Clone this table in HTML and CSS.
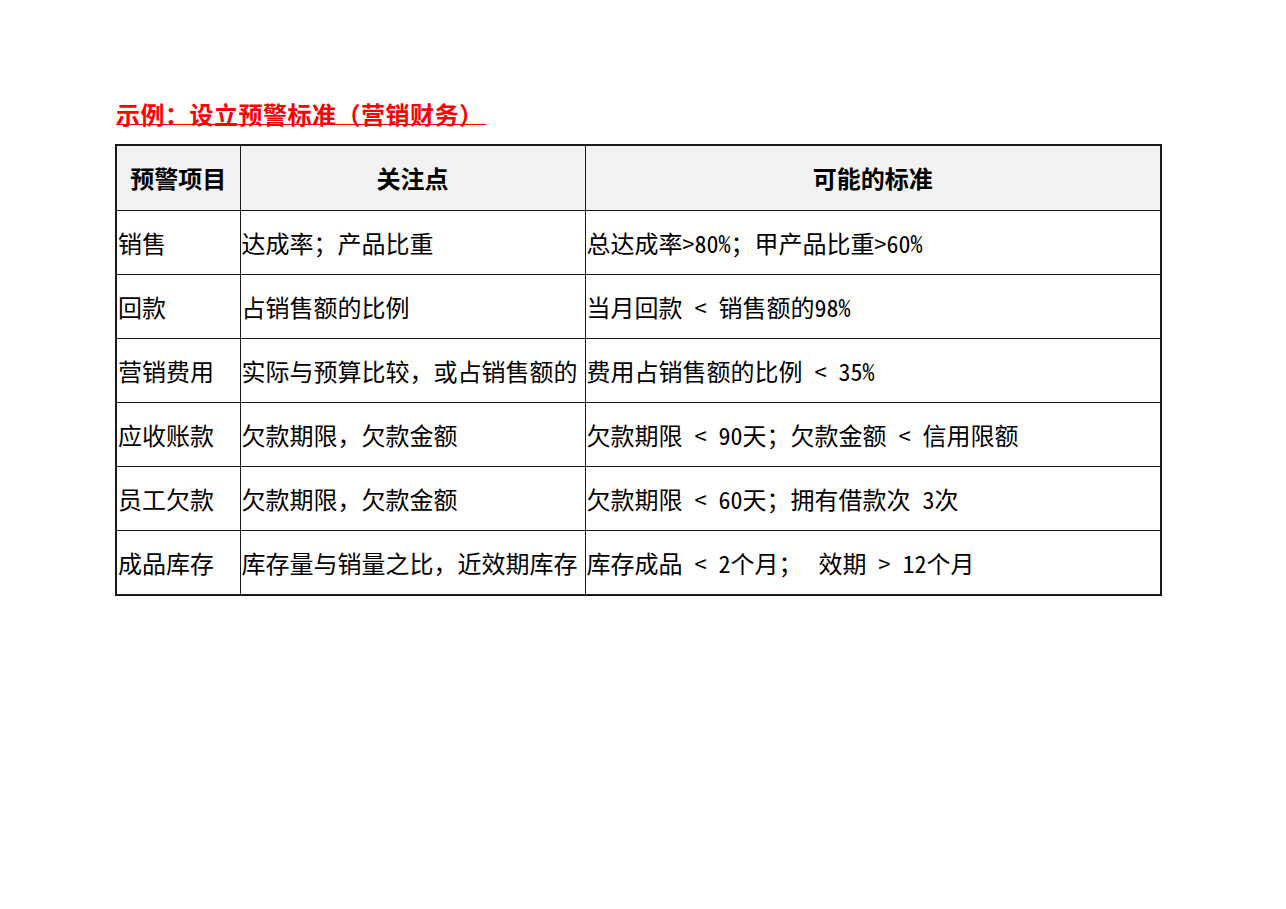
FILE: index.html
```html
<!DOCTYPE html>
<html lang="zh-CN">
<head>
<meta charset="utf-8">
<title>示例：设立预警标准（营销财务）</title>
<link rel="stylesheet" href="styles.css">
</head>
<body>
<div class="sheet">
  <h1 class="title"><span class="title-text">示例：设立预警标准（营销财务）</span></h1>
  <table class="grid">
    <colgroup>
      <col class="c1">
      <col class="c2">
      <col class="c3">
    </colgroup>
    <thead>
      <tr>
        <th>预警项目</th>
        <th>关注点</th>
        <th>可能的标准</th>
      </tr>
    </thead>
    <tbody>
      <tr><td>销售</td><td>达成率；产品比重</td><td>总达成率&gt;80%；甲产品比重&gt;60%</td></tr>
      <tr><td>回款</td><td>占销售额的比例</td><td>当月回款 &lt; 销售额的98%</td></tr>
      <tr><td>营销费用</td><td>实际与预算比较，或占销售额的</td><td>费用占销售额的比例 &lt; 35%</td></tr>
      <tr><td>应收账款</td><td>欠款期限，欠款金额</td><td>欠款期限 &lt; 90天；欠款金额 &lt; 信用限额</td></tr>
      <tr><td>员工欠款</td><td>欠款期限，欠款金额</td><td>欠款期限 &lt; 60天；拥有借款次 3次</td></tr>
      <tr><td>成品库存</td><td>库存量与销量之比，近效期库存</td><td>库存成品 &lt; 2个月；<span class="gap"></span>效期 &gt; 12个月</td></tr>
    </tbody>
  </table>
</div>
</body>
</html>
```

FILE: styles.css
```css
html, body {
  margin: 0;
  padding: 0;
  background: #ffffff;
}

body {
  font-family: "Noto Sans Mono CJK SC", "Noto Sans CJK SC", "Noto Sans", sans-serif;
  color: #000000;
}

.sheet {
  padding: 104px 0 0 115px;
}

.title {
  margin: 0 0 19px 1px;
  font-size: 24px;
  line-height: 20px;
  font-weight: bold;
  color: #ff0000;
  letter-spacing: 0.5px;
}

.title-text {
  display: inline-block;
  padding-right: 2px;
  border-bottom: 1.5px solid #ff0000;
}

.grid {
  border-collapse: collapse;
  table-layout: fixed;
  width: 1045px;
  border: 2px solid #1a1a1a;
}

.c1 { width: 124px; }
.c2 { width: 345px; }
.c3 { width: 576px; }

.grid th,
.grid td {
  border: 1.5px solid #1a1a1a;
  font-size: 24px;
  line-height: 28px;
  padding: 0 0 0 1px;
  white-space: nowrap;
  overflow: hidden;
  vertical-align: middle;
}

.grid th {
  height: 64px;
  background: #f2f2f2;
  font-weight: bold;
  text-align: center;
  padding: 0;
}

.grid td {
  height: 63px;
  text-align: left;
}

.gap {
  display: inline-block;
  width: 16px;
}
```
